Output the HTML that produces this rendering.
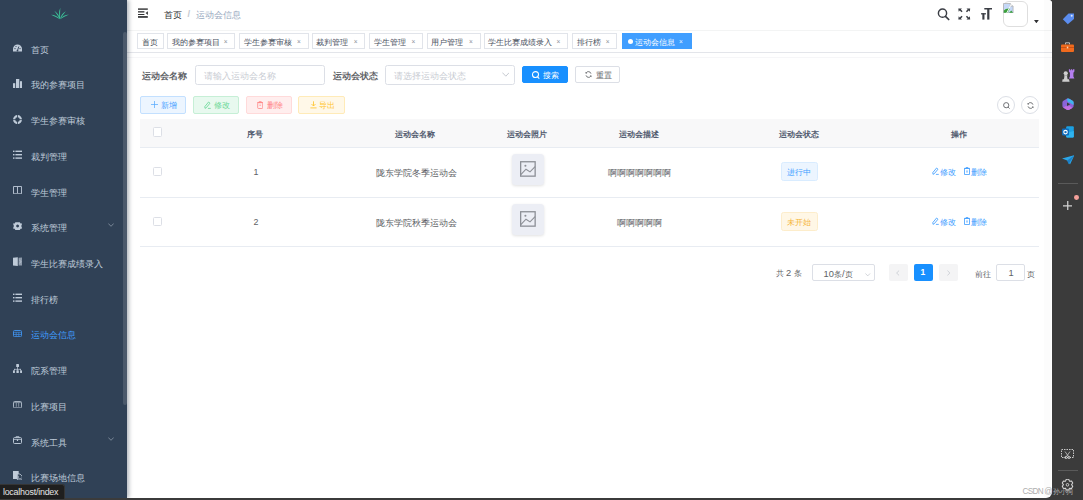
<!DOCTYPE html>
<html><head><meta charset="utf-8">
<style>
@font-face{font-family:"LSc";src:local("Liberation Sans"),local("LiberationSans");font-weight:400;size-adjust:130%;unicode-range:U+2E80-9FFF,U+F900-FAFF,U+FF00-FFEF}
@font-face{font-family:"LSc";src:local("Liberation Sans Bold"),local("LiberationSans-Bold");font-weight:700;size-adjust:130%;unicode-range:U+2E80-9FFF,U+F900-FAFF,U+FF00-FFEF}
*{box-sizing:border-box;margin:0;padding:0}
html,body{width:1083px;height:500px;overflow:hidden;background:#3b3b3b;font-family:"LSc","Liberation Sans",sans-serif}
.a{position:absolute}
.t,.c{white-space:nowrap;line-height:1}
#page{position:absolute;left:0;top:0;width:1052px;height:498px;background:#fff;border-radius:0 3.5px 6px 0;overflow:hidden}
#side{position:absolute;left:0;top:0;width:127px;height:498px;background:#304156;box-shadow:1.5px 0 4px rgba(0,21,41,.3);z-index:5}
.mi{position:absolute;left:0;width:127px;height:36px}
.mi .ic{position:absolute;left:12.8px}
.mi .t{position:absolute;left:30.6px;top:15.5px;font-size:8.923px;color:#bfcbd9}
.mi.on .t{color:#409eff}
.chev{position:absolute;left:108px;top:14px;width:6px;height:4px}
#scroll{position:absolute;left:123px;top:32px;width:3.5px;height:373px;background:#4b596b;border-radius:2px}
#nav{position:absolute;left:127px;top:0;width:925px;height:31px;background:#fff;border-bottom:1px solid #f3f4f4}
#tv{position:absolute;left:127px;top:31px;width:925px;height:22px;background:#fff;border-bottom:1.2px solid #e3e5ea}
#tv2{position:absolute;left:127px;top:57.3px;width:925px;height:1px;background:#f6f6f8}
.tag{position:absolute;top:33px;height:16px;border:1px solid #e1e4ea;background:#fff;color:#495060}
.tag .t{position:absolute;top:4.934px;font-size:7.615px}
.tag .x{position:absolute;top:5px;font-size:6.6px;line-height:1;color:#8d929b}
.lbl{position:absolute;top:72.266px;font-size:8.923px;font-weight:bold;color:#606266}
.inp{position:absolute;top:64.5px;height:20px;border:1px solid #dcdfe6;border-radius:2.5px;background:#fff}
.ph{position:absolute;top:6.468px;left:8.2px;font-size:8.538px;color:#c9ccd3}
.btn{position:absolute;height:18px;border:1px solid;border-radius:2px}
.btn .t{position:absolute;top:4.934px;font-size:7.615px}
.th{position:absolute;top:130.110px;font-size:8.308px;font-weight:bold;color:#515a6e}
.td{position:absolute;font-size:8.923px;color:#606266}
.cb{position:absolute;left:153px;width:9.2px;height:9.4px;border:1px solid #dcdfe6;border-radius:1.5px;background:#fff}
.hl{position:absolute;left:140px;width:899px;height:1px;background:#e8ecf2}
.img{position:absolute;left:512px;width:32px;height:31.6px;background:#eceef5;border-radius:3.5px;box-shadow:0 1px 3px rgba(0,0,0,.12)}
.pg{position:absolute;top:264.3px;height:17px;width:19px;background:#f4f4f5;border-radius:2px}
.ri{position:absolute;left:1061px}

</style></head><body>
<div id="page">
  <div id="side">
    <svg class="a" style="left:50px;top:6.8px" width="20" height="13" viewBox="0 0 20 13"><path d="M10.00 12.20Q6.47 8.02 1.00 7.80Q5.59 9.82 10.00 12.20ZM10.00 12.20Q8.97 6.76 4.30 3.80Q7.32 7.89 10.00 12.20ZM10.00 12.20Q7.95 6.44 10.30 0.80Q9.95 6.49 10.00 12.20ZM10.00 12.20Q11.13 6.95 15.80 4.30Q12.74 8.13 10.00 12.20ZM10.00 12.20Q13.50 7.94 19.00 7.60Q14.41 9.72 10.00 12.20Z" fill="#3cc49a"/></svg>
<div class="mi" style="top:30.15px"><svg class="ic" viewBox="0 0 9 7.6" style="top:13.9px;width:9px;height:7.6px"><path d="M0 7.6V5A4.5 4.5 0 0 1 9 5V7.6Z" fill="#bfcbd9"/><path d="M4.5 6.6L5.8 2.6" stroke="#304156" stroke-width=".9"/><circle cx="2" cy="4.6" r=".65" fill="#304156"/><circle cx="7" cy="4.6" r=".65" fill="#304156"/><circle cx="3" cy="2.5" r=".55" fill="#304156"/><circle cx="4.5" cy="6.6" r=".9" fill="#304156"/></svg><span class="t">首页</span></div>
<div class="mi" style="top:65.87px"><svg class="ic" viewBox="0 0 9 9.2" style="top:12.9px;width:9px;height:9.2px"><rect x="0" y="4.2" width="2.2" height="5" fill="#bfcbd9"/><rect x="3" y="0" width="3.3" height="9.2" fill="#bfcbd9"/><rect x="7" y="2.2" width="2" height="7" fill="#bfcbd9"/></svg><span class="t">我的参赛项目</span></div>
<div class="mi" style="top:101.59px"><svg class="ic" viewBox="0 0 9 9.2" style="top:13px;width:9px;height:9.2px"><circle cx="4.5" cy="4.6" r="3.4" fill="none" stroke="#bfcbd9" stroke-width="2.2"/><path d="M4.5 0V9.2M0 4.6H9" stroke="#304156" stroke-width=".8"/></svg><span class="t">学生参赛审核</span></div>
<div class="mi" style="top:137.31px"><svg class="ic" viewBox="0 0 9 9.5" style="top:12.7px;width:9px;height:9.5px"><g fill="#bfcbd9"><rect x="0" y=".6" width="1.5" height="1.4"/><rect x="2.4" y=".6" width="6.6" height="1.4"/><rect x="0" y="4" width="1.5" height="1.4"/><rect x="2.4" y="4" width="6.6" height="1.4"/><rect x="0" y="7.4" width="1.5" height="1.4"/><rect x="2.4" y="7.4" width="6.6" height="1.4"/></g></svg><span class="t">裁判管理</span></div>
<div class="mi" style="top:173.03px"><svg class="ic" viewBox="0 0 9 8.6" style="top:12.8px;width:9px;height:8.6px"><path d="M.5 .5H8.5V7.8H5Q4.5 8.4 4 7.8H.5Z M4.5 .8V7.6" fill="none" stroke="#bfcbd9" stroke-width=".9"/></svg><span class="t">学生管理</span></div>
<div class="mi" style="top:208.75px"><svg class="ic" viewBox="0 0 9.2 8.2" style="top:13.25px;width:9.2px;height:8.2px"><path d="M2.4 0.2H6.8L7.6 1.5 9.2 1.6 8.3 4.1 9.2 6.6 7.6 6.7 6.8 8H2.4L1.6 6.7 0 6.6 .9 4.1 0 1.6 1.6 1.5Z" fill="#bfcbd9"/><circle cx="4.6" cy="4.1" r="1.5" fill="#304156"/></svg><span class="t">系统管理</span><svg class="chev" viewBox="0 0 6 4"><path d="M0.3 0.5L3 3.3 5.7 0.5" fill="none" stroke="#8c98a8" stroke-width=".8"/></svg></div>
<div class="mi" style="top:244.47px"><svg class="ic" viewBox="0 0 9 9.2" style="top:12.5px;width:9px;height:9.2px"><path d="M0 .8L4.8 .2V9L0 8.4Z" fill="#bfcbd9"/><path d="M5.6 .8L9 .6V8.6L5.6 8.6Z" fill="#8e9bab"/><path d="M6.3 3L8.3 4.6 6.3 6.2" fill="none" stroke="#bfcbd9" stroke-width=".7"/></svg><span class="t">学生比赛成绩录入</span></div>
<div class="mi" style="top:280.19px"><svg class="ic" viewBox="0 0 9 9.5" style="top:12.8px;width:9px;height:9.5px"><g fill="#bfcbd9"><rect x="0" y=".6" width="1.5" height="1.4"/><rect x="2.4" y=".6" width="6.6" height="1.4"/><rect x="0" y="4" width="1.5" height="1.4"/><rect x="2.4" y="4" width="6.6" height="1.4"/><rect x="0" y="7.4" width="1.5" height="1.4"/><rect x="2.4" y="7.4" width="6.6" height="1.4"/></g></svg><span class="t">排行榜</span></div>
<div class="mi on" style="top:315.91px"><svg class="ic" viewBox="0 0 9 7.2" style="top:13.7px;width:9px;height:7.2px"><rect x=".5" y=".5" width="8" height="6.2" rx="1" fill="none" stroke="#3f8fe6" stroke-width="1"/><path d="M.8 2.3H8.2M.8 4.5H8.2M3.2 2.3V6.5M5.8 2.3V6.5" stroke="#3f8fe6" stroke-width=".7"/></svg><span class="t">运动会信息</span></div>
<div class="mi" style="top:351.63px"><svg class="ic" viewBox="0 0 9 9" style="top:12.4px;width:9px;height:9px"><g fill="#bfcbd9"><rect x="3.2" y="0" width="2.8" height="3" rx=".6"/><rect x="4.2" y="3" width=".7" height="2.2"/><rect x="1" y="4.9" width="7" height=".7"/><rect x="1" y="4.9" width=".7" height="1.5"/><rect x="7.3" y="4.9" width=".7" height="1.5"/><rect x="4.2" y="4.9" width=".7" height="1.5"/><rect x="0" y="6.2" width="1.9" height="2.8" rx=".6"/><rect x="3.4" y="6.2" width="2.4" height="2.8" rx=".6"/><rect x="7.1" y="6.2" width="1.9" height="2.8" rx=".6"/></g></svg><span class="t">院系管理</span></div>
<div class="mi" style="top:387.35px"><svg class="ic" viewBox="0 0 9 7.4" style="top:13.45px;width:9px;height:7.4px"><rect x=".5" y=".5" width="8" height="6.4" rx="1" fill="none" stroke="#a9b5c3" stroke-width="1"/><path d="M1 1.6H8M3.3 1.8V5.8M5.7 1.8V5.8" stroke="#a9b5c3" stroke-width=".7"/></svg><span class="t">比赛项目</span></div>
<div class="mi" style="top:423.07px"><svg class="ic" viewBox="0 0 9 8" style="top:12.9px;width:9px;height:8px"><rect x=".5" y="1.6" width="8" height="5.9" rx="1" fill="none" stroke="#bfcbd9" stroke-width=".95"/><path d="M3.2 1.6V.4H5.8V1.6M.6 3.4H8.4" stroke="#bfcbd9" stroke-width=".8" fill="none"/><rect x="3.9" y="3.4" width="1.2" height="1.6" fill="#bfcbd9"/></svg><span class="t">系统工具</span><svg class="chev" viewBox="0 0 6 4"><path d="M0.3 0.5L3 3.3 5.7 0.5" fill="none" stroke="#8c98a8" stroke-width=".8"/></svg></div>
<div class="mi" style="top:458.79px"><svg class="ic" viewBox="0 0 9.2 9" style="top:12.2px;width:9.2px;height:9px"><path d="M0 0H5.7V8H0Z" fill="#bfcbd9"/><path d="M4.4 3H7L9.2 5.2V9H4.4Z" fill="#304156" stroke="#bfcbd9" stroke-width=".8"/><path d="M5.5 4.8V7.6H8.2" fill="none" stroke="#bfcbd9" stroke-width=".6"/></svg><span class="t">比赛场地信息</span></div>
    <div id="scroll"></div>
  </div>
  <div id="nav">
    <svg class="a" style="left:11.2px;top:8px" width="10.5" height="10.5" viewBox="0 0 10.5 10.5"><g fill="#303133"><rect x="0" y="0.4" width="9.8" height="1.4"/><rect x="0" y="3.2" width="6.4" height="1.3"/><rect x="0" y="6" width="6.4" height="1"/><rect x="0" y="8.1" width="9.8" height="1.7"/><path d="M9.9 3.2V6.9L7.6 5.05Z"/></g></svg>
    <span class="a t" style="left:37px;top:11.266px;font-size:8.923px;color:#303133">首页</span>
    <span class="a t" style="left:60.4px;top:8.7px;font-size:9.4px;font-weight:bold;color:#c6c9d0">/</span>
    <span class="a t" style="left:69px;top:11.266px;font-size:8.923px;color:#97a8be">运动会信息</span>
    <!-- search icon -->
    <svg class="a" style="left:810px;top:8px" width="13" height="12.5" viewBox="0 0 13 12.5"><circle cx="5.5" cy="5.2" r="4.1" fill="none" stroke="#3a3d44" stroke-width="1.45"/><path d="M8.5 8.3L11.7 11.5" stroke="#3a3d44" stroke-width="1.7" stroke-linecap="round"/></svg>
    <!-- fullscreen -->
    <svg class="a" style="left:831.3px;top:8.2px" width="12.5" height="12" viewBox="0 0 12.5 12"><g fill="#3a3d44"><path d="M0.3 0.4H4L2.9 1.5 4.6 3.2 3.5 4.3 1.8 2.6 0.7 3.7Z"/><path d="M12.2 0.4H8.5L9.6 1.5 7.9 3.2 9 4.3 10.7 2.6 11.8 3.7Z"/><path d="M0.3 11.6H4L2.9 10.5 4.6 8.8 3.5 7.7 1.8 9.4 0.7 8.3Z"/><path d="M12.2 11.6H8.5L9.6 10.5 7.9 8.8 9 7.7 10.7 9.4 11.8 8.3Z"/></g></svg>
    <!-- size TT -->
    <svg class="a" style="left:853.5px;top:8.2px" width="11.5" height="11.8" viewBox="0 0 11.5 11.8"><g fill="#3a3d44"><rect x="3.3" y="0" width="8" height="1.5"/><rect x="6.2" y="0" width="2.2" height="11.6"/><rect x="0" y="5.2" width="5" height="1.2"/><rect x="1.35" y="5.2" width="2.1" height="6.4"/></g></svg>
    <!-- avatar broken image -->
    <div class="a" style="left:875.5px;top:1.3px;width:25.4px;height:25.6px;border:1px solid #dedede;border-radius:6px"></div>
    <svg class="a" style="left:876px;top:2.6px" width="10.6" height="10.4" viewBox="0 0 10.6 10.4"><path d="M0.5 0.5H7.3L10.1 3.3V9.9H0.5Z" fill="#c5d8f7" stroke="#a9a9a9" stroke-width=".7"/><path d="M7.3 0.5V3.3H10.1" fill="#e8e8e8" stroke="#a9a9a9" stroke-width=".6"/><path d="M0.8 9.7V7.6Q3 5 7 5.6L4.6 9.7Z" fill="#3aa13a"/><path d="M6.2 9.7L8.3 7.4 10 9.7Z" fill="#3aa13a"/><path d="M9 0L3.5 10.4" stroke="#fff" stroke-width=".9"/></svg>
    <svg class="a" style="left:907.3px;top:19.5px" width="4.8" height="3.3" viewBox="0 0 4.8 3.3"><path d="M0 0H4.8L2.4 3.3Z" fill="#303133"/></svg>
  </div>
  <div id="tv"></div><div id="tv2"></div>
  <div class="a" style="left:1044px;top:0;width:7.2px;height:498px;background:rgba(0,0,0,.012)"></div>
<div class="tag" style="left:137.0px;width:26.6px"><span class="t" style="left:3.8px">首页</span></div>
<div class="tag" style="left:167.1px;width:68.3px"><span class="t" style="left:3.8px">我的参赛项目</span><span class="x" style="left:55.7px">×</span></div>
<div class="tag" style="left:239.2px;width:69.4px"><span class="t" style="left:3.8px">学生参赛审核</span><span class="x" style="left:56.8px">×</span></div>
<div class="tag" style="left:311.5px;width:53.8px"><span class="t" style="left:3.8px">裁判管理</span><span class="x" style="left:41.2px">×</span></div>
<div class="tag" style="left:369.0px;width:54.0px"><span class="t" style="left:3.8px">学生管理</span><span class="x" style="left:41.4px">×</span></div>
<div class="tag" style="left:426.7px;width:53.9px"><span class="t" style="left:3.8px">用户管理</span><span class="x" style="left:41.3px">×</span></div>
<div class="tag" style="left:483.7px;width:84.5px"><span class="t" style="left:3.8px">学生比赛成绩录入</span><span class="x" style="left:71.9px">×</span></div>
<div class="tag" style="left:572.0px;width:45.4px"><span class="t" style="left:3.8px">排行榜</span><span class="x" style="left:32.8px">×</span></div>
  <div class="tag" style="left:621.5px;width:70px;background:#409eff;border-color:#409eff;color:#fff">
    <span class="a" style="left:5px;top:4.5px;width:5.5px;height:5.5px;border-radius:50%;background:#fff"></span>
    <span class="t" style="left:12.5px">运动会信息</span>
    <span class="x" style="left:56.4px;color:#e8f2ff">×</span>
  </div>

  <!-- search form -->
  <span class="lbl t" style="left:142px">运动会名称</span>
  <div class="inp" style="left:194.5px;width:130px"><span class="ph t">请输入运动会名称</span></div>
  <span class="lbl t" style="left:332.5px">运动会状态</span>
  <div class="inp" style="left:385px;width:129.5px"><span class="ph t">请选择运动会状态</span>
    <svg class="a" style="left:115.5px;top:6.6px" width="7.6" height="5" viewBox="0 0 7.6 5"><path d="M0.4 0.6L3.8 4.2 7.2 0.6" fill="none" stroke="#c0c4cc" stroke-width=".9"/></svg>
  </div>
  <div class="btn" style="left:522px;top:66.2px;width:45.5px;height:17.3px;background:#1890ff;border-color:#1890ff;color:#fff">
    <svg class="a" style="left:9.3px;top:3.6px" width="7.6" height="8" viewBox="0 0 7.6 8"><circle cx="3.5" cy="3.6" r="3" fill="none" stroke="#fff" stroke-width="1.05"/><path d="M5.6 5.8L7.3 7.6" stroke="#fff" stroke-width="1.05"/></svg>
    <span class="t" style="left:20px">搜索</span>
  </div>
  <div class="btn" style="left:574.7px;top:66.2px;width:45.8px;height:17.3px;background:#fff;border-color:#dcdfe6;color:#606266">
    <svg class="a" style="left:9.5px;top:4.2px" width="7" height="7" viewBox="0 0 8 8"><path d="M6.8 3A3 3 0 0 0 1.3 2.2M1.2 5A3 3 0 0 0 6.7 5.8" fill="none" stroke="#606266" stroke-width="1"/><path d="M0.6 0.8V2.8H2.6Z M7.4 7.2V5.2H5.4Z" fill="#606266"/></svg>
    <span class="t" style="left:20px;color:#606266">重置</span>
  </div>

  <!-- action buttons -->
  <div class="btn" style="left:140px;top:96px;width:46px;background:#ecf5ff;border-color:#c3e0ff;color:#4aa3ff">
    <svg class="a" style="left:10.3px;top:4.3px" width="7" height="7" viewBox="0 0 7 7"><path d="M3.5 0V7M0 3.5H7" stroke="#5aabff" stroke-width=".75"/></svg>
    <span class="t" style="left:20.2px">新增</span>
  </div>
  <div class="btn" style="left:193px;top:96px;width:46px;background:#e8f9ef;border-color:#c6efd6;color:#6ad897">
    <svg class="a" style="left:9.6px;top:3.8px" width="7.2" height="8" viewBox="0 0 7.2 8"><path d="M1 7.3L0.8 5.6 4.6 1 6 2.2 2.2 6.8Z" fill="none" stroke="#6ad897" stroke-width=".85" stroke-linejoin="round"/><path d="M3.9 7.4H6.8" stroke="#6ad897" stroke-width=".8"/></svg>
    <span class="t" style="left:20.2px">修改</span>
  </div>
  <div class="btn" style="left:245.5px;top:96px;width:46.5px;background:#ffeeee;border-color:#ffdada;color:#ff8484">
    <svg class="a" style="left:10.2px;top:3.8px" width="6.4" height="8" viewBox="0 0 6.4 8"><path d="M0.2 1.5H6.2M2.1 1.5V0.6H4.3V1.5" fill="none" stroke="#ff8484" stroke-width=".75"/><rect x="0.7" y="1.7" width="5" height="5.8" rx=".8" fill="none" stroke="#ff8484" stroke-width=".8"/><path d="M2.3 4.2H4.1" stroke="#ff8484" stroke-width=".7"/></svg>
    <span class="t" style="left:20.2px">删除</span>
  </div>
  <div class="btn" style="left:298.3px;top:96px;width:46.5px;background:#fff8e8;border-color:#ffebb8;color:#ffc530">
    <svg class="a" style="left:10.3px;top:4px" width="7" height="7.5" viewBox="0 0 7 7.5"><path d="M3.5 0.3V5M1.5 3L3.5 5 5.5 3M0.4 6.9H6.6" fill="none" stroke="#ffc530" stroke-width=".85"/></svg>
    <span class="t" style="left:20.2px">导出</span>
  </div>
  <div class="a" style="left:997px;top:96px;width:18px;height:18px;border:1px solid #dcdfe6;border-radius:50%"></div>
  <svg class="a" style="left:1002.5px;top:101.5px" width="7" height="7" viewBox="0 0 7 7"><circle cx="3.2" cy="3.2" r="2.6" fill="none" stroke="#606266" stroke-width=".9"/><path d="M5.1 5.1L6.6 6.6" stroke="#606266" stroke-width=".9"/></svg>
  <div class="a" style="left:1021.3px;top:96px;width:18px;height:18px;border:1px solid #dcdfe6;border-radius:50%"></div>
  <svg class="a" style="left:1026.8px;top:101.5px" width="7" height="7" viewBox="0 0 8 8"><path d="M6.8 3A3 3 0 0 0 1.3 2.2M1.2 5A3 3 0 0 0 6.7 5.8" fill="none" stroke="#606266" stroke-width="1"/><path d="M0.6 0.8V2.8H2.6Z M7.4 7.2V5.2H5.4Z" fill="#606266"/></svg>

  <!-- table -->
  <div class="a" style="left:140px;top:119px;width:899px;height:28.5px;background:#f8f8f9"></div>
  <div class="hl" style="top:147px"></div>
  <div class="hl" style="top:196.5px"></div>
  <div class="hl" style="top:246.2px"></div>
  <div class="cb" style="top:127.3px"></div>
  <div class="cb" style="top:167px"></div>
  <div class="cb" style="top:216.8px"></div>
  <span class="th t" style="left:247px">序号</span>
  <span class="th t" style="left:395.2px">运动会名称</span>
  <span class="th t" style="left:507.4px">运动会照片</span>
  <span class="th t" style="left:619.2px">运动会描述</span>
  <span class="th t" style="left:778.5px">运动会状态</span>
  <span class="th t" style="left:951.1px">操作</span>

  <span class="a t" style="left:253.5px;top:167.8px;font-size:8.9px;color:#606266">1</span>
  <span class="a t" style="left:253.5px;top:217.6px;font-size:8.9px;color:#606266">2</span>
  <span class="td t" style="left:375.5px;top:169.066px">陇东学院冬季运动会</span>
  <span class="td t" style="left:375.5px;top:218.866px">陇东学院秋季运动会</span>
  <span class="td t" style="left:607.7px;top:169.066px">啊啊啊啊啊啊啊</span>
  <span class="td t" style="left:616.5px;top:218.866px">啊啊啊啊啊</span>
  <div class="img" style="top:153.8px"><svg class="a" style="left:8.2px;top:7.5px" width="16" height="16" viewBox="0 0 16 16"><rect x="0.65" y="0.75" width="14.5" height="14.4" fill="none" stroke="#8c8f96" stroke-width="1.3"/><path d="M0.8 13.6L6 8.2 10 10.9 15.1 5.7" fill="none" stroke="#8c8f96" stroke-width="1.1"/><circle cx="5.4" cy="4.8" r="1.05" fill="#8c8f96"/></svg></div>
  <div class="img" style="top:203.7px"><svg class="a" style="left:8.2px;top:7.5px" width="16" height="16" viewBox="0 0 16 16"><rect x="0.65" y="0.75" width="14.5" height="14.4" fill="none" stroke="#8c8f96" stroke-width="1.3"/><path d="M0.8 13.6L6 8.2 10 10.9 15.1 5.7" fill="none" stroke="#8c8f96" stroke-width="1.1"/><circle cx="5.4" cy="4.8" r="1.05" fill="#8c8f96"/></svg></div>

  <div class="a" style="left:780.7px;top:162.4px;width:37px;height:18.6px;background:#ecf5ff;border:1px solid #d9ecff;border-radius:2.5px"><span class="t a" style="left:5.8px;top:5.934px;font-size:7.615px;color:#409eff">进行中</span></div>
  <div class="a" style="left:780.7px;top:212px;width:37px;height:18.6px;background:#fff7e6;border:1px solid #fdedcb;border-radius:2.5px"><span class="t a" style="left:5.8px;top:5.934px;font-size:7.615px;color:#f5b437">未开始</span></div>

  <!-- row actions -->
  <svg class="a" style="left:932.3px;top:167.1px" width="7.2" height="8" viewBox="0 0 7.2 8"><path d="M1 7.3L0.8 5.6 4.6 1 6 2.2 2.2 6.8Z" fill="none" stroke="#409eff" stroke-width=".85" stroke-linejoin="round"/><path d="M3.9 7.4H6.8" stroke="#409eff" stroke-width=".8"/></svg>
  <span class="a t" style="left:940px;top:169.234px;font-size:7.615px;color:#409eff">修改</span>
  <svg class="a" style="left:963.6px;top:167.1px" width="6" height="8" viewBox="0 0 6 8"><path d="M0.1 1.4H5.9M2 1.4V0.5H4V1.4" fill="none" stroke="#409eff" stroke-width=".75"/><rect x="0.6" y="1.6" width="4.8" height="5.9" fill="none" stroke="#409eff" stroke-width=".8"/><rect x="2.2" y="3.4" width="1.6" height="2.2" fill="#8cc4ff"/></svg>
  <span class="a t" style="left:970.5px;top:169.234px;font-size:7.615px;color:#409eff">删除</span>
  <svg class="a" style="left:932.3px;top:216.8px" width="7.2" height="8" viewBox="0 0 7.2 8"><path d="M1 7.3L0.8 5.6 4.6 1 6 2.2 2.2 6.8Z" fill="none" stroke="#409eff" stroke-width=".85" stroke-linejoin="round"/><path d="M3.9 7.4H6.8" stroke="#409eff" stroke-width=".8"/></svg>
  <span class="a t" style="left:940px;top:218.934px;font-size:7.615px;color:#409eff">修改</span>
  <svg class="a" style="left:963.6px;top:216.8px" width="6" height="8" viewBox="0 0 6 8"><path d="M0.1 1.4H5.9M2 1.4V0.5H4V1.4" fill="none" stroke="#409eff" stroke-width=".75"/><rect x="0.6" y="1.6" width="4.8" height="5.9" fill="none" stroke="#409eff" stroke-width=".8"/><rect x="2.2" y="3.4" width="1.6" height="2.2" fill="#8cc4ff"/></svg>
  <span class="a t" style="left:970.5px;top:218.934px;font-size:7.615px;color:#409eff">删除</span>

  <!-- pagination -->
  <span class="a t" style="left:775.5px;top:269px;font-size:9.3px;color:#606266"><span style="font-size:8.308px">共</span> 2 <span style="font-size:8.308px">条</span></span>
  <div class="a" style="left:812.4px;top:264.2px;width:63px;height:17.3px;border:1px solid #dcdfe6;border-radius:2px">
    <span class="a t" style="left:10.2px;top:4.6px;font-size:9.3px;color:#606266">10<span style="font-size:8.308px">条</span>/<span style="font-size:8.308px">页</span></span>
    <svg class="a" style="left:52px;top:7.5px" width="5.5" height="3.5" viewBox="0 0 6 4"><path d="M0.3 0.5L3 3.3 5.7 0.5" fill="none" stroke="#c0c4cc" stroke-width=".8"/></svg>
  </div>
  <div class="pg" style="left:888.6px"><svg class="a" style="left:7.5px;top:5.5px" width="3.5" height="6" viewBox="0 0 4 6"><path d="M3.5 0.3L0.7 3 3.5 5.7" fill="none" stroke="#c0c4cc" stroke-width=".8"/></svg></div>
  <div class="pg" style="left:914.1px;background:#1890ff"><span class="a t" style="left:6.5px;top:4.2px;font-size:8.5px;font-weight:bold;color:#fff">1</span></div>
  <div class="pg" style="left:939.3px"><svg class="a" style="left:8px;top:5.5px" width="3.5" height="6" viewBox="0 0 4 6"><path d="M0.5 0.3L3.3 3 0.5 5.7" fill="none" stroke="#c0c4cc" stroke-width=".8"/></svg></div>
  <span class="a t" style="left:975.3px;top:269.910px;font-size:8.308px;color:#606266">前往</span>
  <div class="a" style="left:996.2px;top:264.3px;width:28.5px;height:17px;border:1px solid #dcdfe6;border-radius:2px"><span class="a t" style="left:11.3px;top:3.6px;font-size:9.3px;color:#606266">1</span></div>
  <span class="a t" style="left:1026.5px;top:269.910px;font-size:8.308px;color:#606266">页</span>

  
</div>

<!-- right browser panel icons -->
<svg class="a" style="left:1061.5px;top:13px" width="12.5" height="11.5" viewBox="0 0 12.5 11.5"><path d="M6.5 0.5H12V6L5.8 11.2 0.8 6.2Z" fill="#5b8def"/><circle cx="9.7" cy="2.8" r="1" fill="#dbe7ff"/></svg>
<svg class="a" style="left:1061px;top:42px" width="13" height="10" viewBox="0 0 13 10"><path d="M4.5 2.5V0.8H8.5V2.5" fill="none" stroke="#c9c9c9" stroke-width=".9"/><rect x="0" y="2.5" width="13" height="7.5" rx="1" fill="#f06a1d"/><rect x="0" y="5.2" width="13" height=".7" fill="#b84812"/><rect x="5.8" y="4.6" width="1.5" height="1.8" fill="#ffd6b0"/></svg>
<svg class="a" style="left:1061.5px;top:68.5px" width="13" height="13" viewBox="0 0 13 13"><circle cx="3.75" cy="4.3" r="2.1" fill="#cfcfcf"/><rect x="2.1" y="6.3" width="3.3" height=".9" fill="#cfcfcf"/><path d="M2.5 7.1H5L5.6 10.3H7L7.6 12.7H0.2L0.6 10.3H1.9Z" fill="#cdcdcd"/><path d="M6.9 0.3H8.1V1.3H8.9V0.3H10.1V1.3H10.9V0.3H12.4V2.6L11.4 3.7V7.4L12.4 9.6H6.9L7.9 7.4V3.7L6.9 2.6Z" fill="#b47ef0"/></svg>
<svg class="a" style="left:1062px;top:97.5px" width="12" height="12.5" viewBox="0 0 12 12.5"><path d="M6 0.4Q6.6 0.4 7.2 0.8L10.6 2.8Q11.6 3.4 11.6 4.6V8Q11.6 9.2 10.6 9.8L7.2 11.7Q6 12.4 4.8 11.7L1.4 9.8Q0.4 9.2 0.4 8V4.6Q0.4 3.4 1.4 2.8L4.8 0.8Q5.4 0.4 6 0.4Z" fill="#8b63d9"/><path d="M4.8 0.8Q6 0.1 7.2 0.8L10.6 2.8Q11.6 3.4 11.6 4.6V7L8.6 5.2Q7.6 4.2 6 4.4Z" fill="#3eb6ee"/><path d="M1.2 9.6L4 8Q5.6 8.8 7.4 7.8L10.4 9.9 7.2 11.7Q6 12.4 4.8 11.7Z" fill="#c46fe0"/><path d="M5 4.6L8.2 6.3 5 8.1Z" fill="#3a3a3a"/></svg>
<svg class="a" style="left:1062px;top:126.3px" width="12" height="11.8" viewBox="0 0 12 11.8"><rect x="4.2" y="0.3" width="7.6" height="11.2" rx="1" fill="#1ba0e2"/><path d="M4.2 7L11.8 5V10.5Q11.8 11.5 10.8 11.5H5.2Q4.2 11.5 4.2 10.5Z" fill="#2fb4f0"/><rect x="0" y="2.6" width="7" height="7" rx="1" fill="#0f6cbd"/><circle cx="3.5" cy="6.1" r="1.75" fill="none" stroke="#fff" stroke-width="1.1"/></svg>
<svg class="a" style="left:1061.5px;top:155px" width="12.5" height="9.5" viewBox="0 0 12.5 9.5"><path d="M0 3.5L12.5 0 8 9.5 5.2 5.6Z" fill="#2aa6e8"/><path d="M5.2 5.6L12.5 0 6.5 9.2Z" fill="#1b7fc6"/></svg>
<div class="a" style="left:1057.5px;top:182.5px;width:20px;height:1px;background:#5a5a5a"></div>
<svg class="a" style="left:1062.5px;top:200.5px" width="9.5" height="9.5" viewBox="0 0 9.5 9.5"><path d="M4.75 0V9.5M0 4.75H9.5" stroke="#d2d2d2" stroke-width="1.25"/></svg>
<div class="a" style="left:1074.2px;top:195.4px;width:4.8px;height:4.8px;border-radius:50%;background:#f4a09a;box-shadow:0 0 0 .6px #3a3a3a"></div>
<svg class="a" style="left:1061px;top:448.8px" width="13" height="10.5" viewBox="0 0 13 10.5"><rect x="0.5" y="0.5" width="12" height="8" fill="none" stroke="#d8d8d8" stroke-width=".9" stroke-dasharray="1.5 1"/><circle cx="5" cy="8.5" r="1.2" fill="none" stroke="#d8d8d8" stroke-width=".7"/><circle cx="8" cy="8.5" r="1.2" fill="none" stroke="#d8d8d8" stroke-width=".7"/><path d="M4 2.5L7.5 7.5M9 2.5L5.5 7.5" stroke="#d8d8d8" stroke-width=".7"/></svg>
<div class="a" style="left:1057.5px;top:470px;width:20px;height:1px;background:#5a5a5a"></div>
<svg class="a" style="left:1060.7px;top:479.2px" width="13" height="11.5" viewBox="0 0 13 11.5"><path d="M4.53 2.10L5.30 0.33L7.70 0.33L8.47 2.10L8.63 2.20L10.55 1.98L11.75 4.06L10.60 5.60L10.60 5.80L11.75 7.34L10.55 9.42L8.63 9.20L8.47 9.30L7.70 11.07L5.30 11.07L4.53 9.30L4.37 9.20L2.45 9.42L1.25 7.34L2.40 5.80L2.40 5.60L1.25 4.06L2.45 1.98L4.37 2.20Z" fill="none" stroke="#d6d6d6" stroke-width="1.05" stroke-linejoin="round"/><circle cx="6.5" cy="5.8" r="1.3" fill="none" stroke="#d6d6d6" stroke-width=".9"/></svg>
<span class="a t" style="z-index:3;left:1022.6px;top:487.6px;font-size:8.2px;letter-spacing:-.75px;color:#aeaeae">CSDN <span style="letter-spacing:0">@</span><span style="font-size:6.615px;letter-spacing:-.1px">孙小狗</span></span>

<!-- status bubble -->
<div class="a" style="z-index:10;left:0;top:483.8px;width:64.6px;height:15px;background:#1f1f1f;border-radius:0 3px 0 0;border-top:1px solid #353535;border-right:1px solid #353535"></div>
<span class="a t" style="z-index:11;left:2.9px;top:488px;font-size:8.9px;letter-spacing:-.22px;color:#e6e6e6">localhost/index</span>

</body></html>
